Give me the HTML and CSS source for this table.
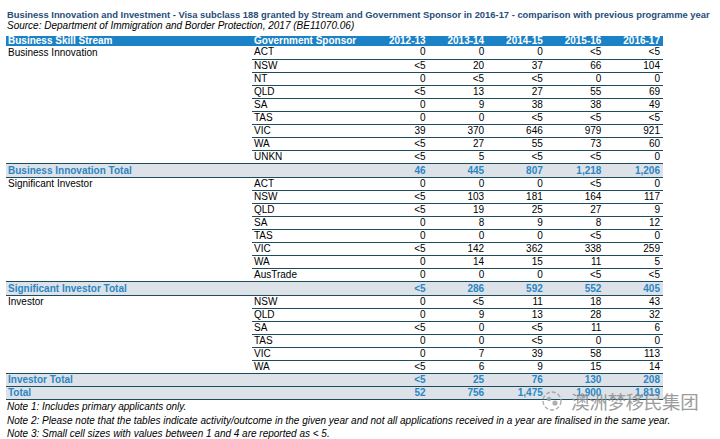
FILE: index.html
```html
<!DOCTYPE html>
<html>
<head>
<meta charset="utf-8">
<link rel="stylesheet" href="styles.css">
</head>
<body>
<div class="page">
  <div class="title">Business Innovation and Investment - Visa subclass 188 granted by Stream and Government Sponsor in 2016-17 - comparison with previous programme year</div>
  <div class="source">Source: Department of Immigration and Border Protection, 2017 (BE11070.06)</div>
  <table class="data">
    <colgroup>
      <col class="c-stream"><col class="c-sponsor"><col class="c-num"><col class="c-num"><col class="c-num"><col class="c-num"><col class="c-num">
    </colgroup>
    <thead>
      <tr class="head"><th class="l">Business Skill Stream</th><th class="l">Government Sponsor</th><th>2012-13</th><th>2013-14</th><th>2014-15</th><th>2015-16</th><th>2016-17</th></tr>
    </thead>
    <tbody>
      <tr><td class="stream">Business Innovation</td><td class="sp">ACT</td><td>0</td><td>0</td><td>0</td><td>&lt;5</td><td>&lt;5</td></tr>
      <tr><td class="stream"></td><td class="sp">NSW</td><td>&lt;5</td><td>20</td><td>37</td><td>66</td><td>104</td></tr>
      <tr><td class="stream"></td><td class="sp">NT</td><td>0</td><td>&lt;5</td><td>&lt;5</td><td>0</td><td>0</td></tr>
      <tr><td class="stream"></td><td class="sp">QLD</td><td>&lt;5</td><td>13</td><td>27</td><td>55</td><td>69</td></tr>
      <tr><td class="stream"></td><td class="sp">SA</td><td>0</td><td>9</td><td>38</td><td>38</td><td>49</td></tr>
      <tr><td class="stream"></td><td class="sp">TAS</td><td>0</td><td>0</td><td>&lt;5</td><td>&lt;5</td><td>&lt;5</td></tr>
      <tr><td class="stream"></td><td class="sp">VIC</td><td>39</td><td>370</td><td>646</td><td>979</td><td>921</td></tr>
      <tr><td class="stream"></td><td class="sp">WA</td><td>&lt;5</td><td>27</td><td>55</td><td>73</td><td>60</td></tr>
      <tr><td class="stream"></td><td class="sp">UNKN</td><td>&lt;5</td><td>5</td><td>&lt;5</td><td>&lt;5</td><td>0</td></tr>
      <tr class="total"><td class="l" colspan="2">Business Innovation Total</td><td>46</td><td>445</td><td>807</td><td>1,218</td><td>1,206</td></tr>
      <tr><td class="stream">Significant Investor</td><td class="sp">ACT</td><td>0</td><td>0</td><td>0</td><td>&lt;5</td><td>0</td></tr>
      <tr><td class="stream"></td><td class="sp">NSW</td><td>&lt;5</td><td>103</td><td>181</td><td>164</td><td>117</td></tr>
      <tr><td class="stream"></td><td class="sp">QLD</td><td>&lt;5</td><td>19</td><td>25</td><td>27</td><td>9</td></tr>
      <tr><td class="stream"></td><td class="sp">SA</td><td>0</td><td>8</td><td>9</td><td>8</td><td>12</td></tr>
      <tr><td class="stream"></td><td class="sp">TAS</td><td>0</td><td>0</td><td>0</td><td>&lt;5</td><td>0</td></tr>
      <tr><td class="stream"></td><td class="sp">VIC</td><td>&lt;5</td><td>142</td><td>362</td><td>338</td><td>259</td></tr>
      <tr><td class="stream"></td><td class="sp">WA</td><td>0</td><td>14</td><td>15</td><td>11</td><td>5</td></tr>
      <tr><td class="stream"></td><td class="sp">AusTrade</td><td>0</td><td>0</td><td>0</td><td>&lt;5</td><td>&lt;5</td></tr>
      <tr class="total"><td class="l" colspan="2">Significant Investor Total</td><td>&lt;5</td><td>286</td><td>592</td><td>552</td><td>405</td></tr>
      <tr><td class="stream">Investor</td><td class="sp">NSW</td><td>0</td><td>&lt;5</td><td>11</td><td>18</td><td>43</td></tr>
      <tr><td class="stream"></td><td class="sp">QLD</td><td>0</td><td>9</td><td>13</td><td>28</td><td>32</td></tr>
      <tr><td class="stream"></td><td class="sp">SA</td><td>&lt;5</td><td>0</td><td>&lt;5</td><td>11</td><td>6</td></tr>
      <tr><td class="stream"></td><td class="sp">TAS</td><td>0</td><td>0</td><td>&lt;5</td><td>0</td><td>0</td></tr>
      <tr><td class="stream"></td><td class="sp">VIC</td><td>0</td><td>7</td><td>39</td><td>58</td><td>113</td></tr>
      <tr><td class="stream"></td><td class="sp">WA</td><td>&lt;5</td><td>6</td><td>9</td><td>15</td><td>14</td></tr>
      <tr class="total"><td class="l" colspan="2">Investor Total</td><td>&lt;5</td><td>25</td><td>76</td><td>130</td><td>208</td></tr>
      <tr class="total"><td class="l" colspan="2">Total</td><td>52</td><td>756</td><td>1,475</td><td>1,900</td><td>1,819</td></tr>
    </tbody>
  </table>
  <div class="notes">
    <div>Note 1: Includes primary applicants only.</div>
    <div>Note 2: Please note that the tables indicate activity/outcome in the given year and not all applications received in a year are finalised in the same year.</div>
    <div>Note 3: Small cell sizes with values between 1 and 4 are reported as &lt; 5.</div>
  </div>
  <div class="watermark">
    <svg class="wm-logo" width="28" height="24" viewBox="0 0 28 24">
      <circle cx="14" cy="12" r="9" fill="none" stroke="#a0a0a0" stroke-width="1.4" stroke-dasharray="4 2"/>
      <circle cx="11" cy="10" r="2.2" fill="#a0a0a0"/>
      <circle cx="17" cy="14" r="2.6" fill="#a0a0a0"/>
    </svg>
    <span class="wm-text">澳洲梦移民集团</span>
  </div>
</div>
</body>
</html>
```

FILE: styles.css
```css
* { box-sizing: border-box; }
html, body { margin: 0; padding: 0; background: #ffffff; }
body { font-family: "Liberation Sans", Arial, sans-serif; color: #000; }
.page { position: relative; width: 720px; height: 439px; padding: 9px 0 0 6px; overflow: hidden; }
.title { font-size: 9.4px; font-weight: bold; color: #1f4e79; line-height: 11px; padding-left: 1px; white-space: nowrap; }
.source { font-size: 10px; font-style: italic; line-height: 12px; padding-left: 1px; margin-bottom: 4px; }
.data { border-collapse: collapse; table-layout: fixed; width: 657px; font-size: 10px; }
.c-stream { width: 246px; }
.c-sponsor { width: 118px; }
.c-num { width: 58.6px; }
.data th, .data td { padding: 0 3px 0 2px; text-align: right; white-space: nowrap; line-height: 12px; height: 13.12px; }
.data .l { text-align: left; }
.data .head th { background: #1b82c5; color: #fff; font-weight: bold; height: 10px; line-height: 10px; }
.data td { border-bottom: 1px solid #1d4c5e; }
.data td.stream { border-bottom: none; text-align: left; }
.data td.sp { text-align: left; }
.total td { background: #dde2e8; color: #2a86c4; font-weight: bold; border-top: 1px solid #1d4c5e; border-bottom: 1px solid #1d4c5e; }
.notes { font-size: 10px; font-style: italic; line-height: 13.5px; padding-left: 1px; margin-top: 0; }
.watermark { position: absolute; left: 538px; top: 389px; display: flex; align-items: center; gap: 5px; opacity: 0.85; }
.wm-text { font-family: "Noto Sans CJK SC", sans-serif; font-size: 18.5px; color: #8c8c8c; line-height: 24px; letter-spacing: -0.3px; }
```
